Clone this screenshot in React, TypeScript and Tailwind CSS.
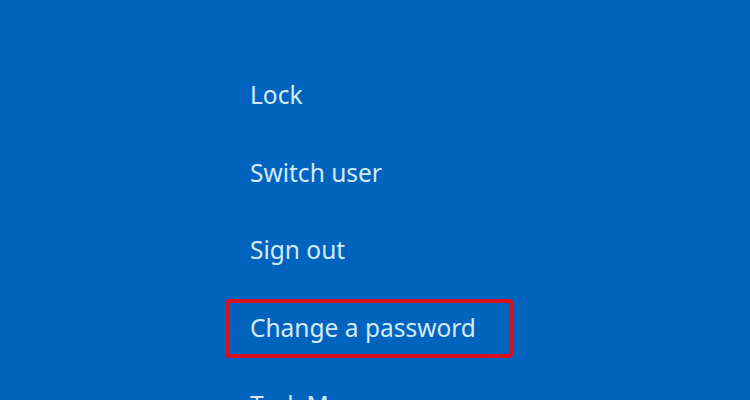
const items = ['Lock', 'Switch user', 'Sign out', 'Change a password', 'Task Manager']

export default function App() {
  return (
    <div className="w-[750px] h-[400px] overflow-hidden bg-[#0064bf] font-['Noto_Sans',sans-serif]">
      <div className="flex flex-col gap-[18.5px] pt-[66.5px] pl-[225px]">
        {items.map((label) => (
          <div
            key={label}
            className={`w-[288px] h-[59px] flex items-center pl-[21px] rounded-[4px] border-[4px] ${
              label === 'Change a password' ? 'border-[#d8101e]' : 'border-transparent'
            }`}
          >
            <span className="text-[24.5px] text-[#d5eafa] leading-none -mt-[1px]">{label}</span>
          </div>
        ))}
      </div>
    </div>
  )
}
